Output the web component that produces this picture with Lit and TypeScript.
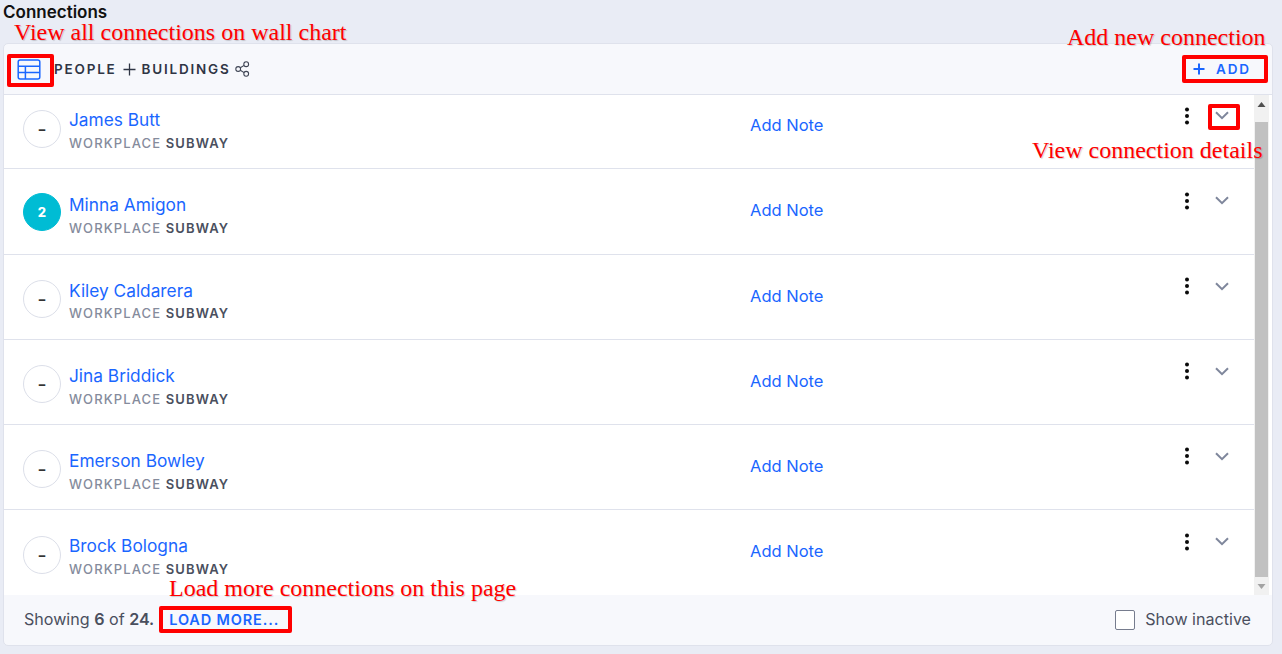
import { LitElement, html, css, svg } from "lit";
import { customElement } from "lit/decorators.js";

const people: [string, string][] = [
  ["James Butt", ""],
  ["Minna Amigon", "2"],
  ["Kiley Caldarera", ""],
  ["Jina Briddick", ""],
  ["Emerson Bowley", ""],
  ["Brock Bologna", ""],
];

const notes = [
  { t: "View all connections on wall chart", cls: "n1" },
  { t: "Add new connection", cls: "n2" },
  { t: "View connection details", cls: "n3" },
  { t: "Load more connections on this page", cls: "n4" },
];

@customElement("app-root")
export class AppRoot extends LitElement {
  static styles = css`
    :host {
      display: block;
      position: relative;
      width: 1282px;
      height: 654px;
      overflow: hidden;
      background: #e9ecf5;
      font-family: Inter, "Open Sans", sans-serif;
      color: #3f4555;
    }
    .title {
      height: 43px;
      box-sizing: border-box;
      padding: 3px 0 0 3px;
      font-size: 17px;
      line-height: 19px;
      font-weight: 600;
      color: #111;
    }
    .card {
      margin: 0 9px 0 3px;
      height: 603px;
      box-sizing: border-box;
      border: 1px solid #dfe2ec;
      border-radius: 5px;
      background: #f7f8fc;
      display: flex;
      flex-direction: column;
      overflow: hidden;
    }
    .head {
      height: 50px;
      flex: none;
      display: flex;
      align-items: center;
      padding: 0 21px 0 13px;
      border-bottom: 1px solid #dfe2ec;
    }
    .head-title {
      margin-left: 13px;
      font-size: 13.5px;
      font-weight: 600;
      letter-spacing: 1.8px;
      color: #2f3545;
      display: flex;
      align-items: center;
    }
    .plus-sm { margin: 0 6px 0 6px; display: block; }
    .share { margin-left: 4px; display: block; }
    .add {
      margin-left: auto;
      display: flex;
      align-items: center;
      gap: 11px;
      font-size: 13.5px;
      font-weight: 600;
      letter-spacing: 1.9px;
      color: #1a66ff;
    }
    .body { flex: 1; display: flex; min-height: 0; background: #fff; }
    .list { flex: 1; min-width: 0; overflow: hidden; }
    .row {
      height: 85.2px;
      box-sizing: border-box;
      border-bottom: 1px solid #dfe2ec;
      display: flex;
      align-items: flex-start;
      padding: 24px 0 0 19px;
    }
    .row:first-child { height: 74.4px; padding-top: 13px; }
    .row:last-child { border-bottom: 0; }
    .badge {
      width: 38px;
      height: 38px;
      box-sizing: border-box;
      flex: none;
      margin-top: 1.5px;
      border: 1px solid #dcdfe9;
      border-radius: 50%;
      display: flex;
      align-items: center;
      justify-content: center;
      font-size: 13px;
      font-weight: 800;
      color: #333;
    }
    .badge.on { background: #00bcd4; border-color: #00bcd4; color: #fff; margin-top: 0; }
    .who { margin-left: 8px; width: 681px; flex: none; padding-top: 1px; }
    .name { font-size: 17.3px; line-height: 22px; color: #1a66ff; }
    .sub {
      margin-top: 3.9px;
      font-size: 13px;
      line-height: 16px;
      letter-spacing: 1.12px;
      font-weight: 500;
      color: #858b9c;
    }
    .sub b { color: #4a4f5e; font-weight: 600; }
    .note { font-size: 16.5px; line-height: 22px; margin-top: 6px; color: #1a66ff; width: 434px; flex: none; }
    .dots { margin-top: -1.5px; display: block; flex: none; }
    .chev { margin: 3px 0 0 25px; display: block; flex: none; }
    .bar {
      width: 15px;
      margin-right: 3px;
      flex: none;
      background: #f1f1f1;
      display: flex;
      flex-direction: column;
      align-items: center;
    }
    .arrow { height: 17px; flex: none; display: block; }
    .thumb { flex: 1; width: 13px; background: #c1c1c1; margin: 10px 0 1px; }
    .foot {
      height: 50px;
      flex: none;
      display: flex;
      align-items: center;
      padding: 0 21px 0 20px;
      font-size: 16.1px;
      color: #4a4f5e;
    }
    .foot b { font-weight: 600; }
    .txt { padding-bottom: 2px; }
    .more {
      margin-left: 15px;
      font-size: 14.5px;
      font-weight: 600;
      letter-spacing: 0.85px;
      color: #1a66ff;
    }
    .inactive { margin-left: auto; display: flex; align-items: center; gap: 10px; }
    .box {
      width: 20px;
      height: 20px;
      box-sizing: border-box;
      border: 1px solid #767c8e;
      border-radius: 2px;
      background: #fff;
    }
    .mark { position: absolute; box-sizing: border-box; border: 4px solid #f00; border-radius: 2px; }
    .m1 { left: 7px; top: 54px; width: 47px; height: 33px; }
    .m2 { left: 1182px; top: 55px; width: 86px; height: 28px; }
    .m3 { left: 1208px; top: 104px; width: 32px; height: 26px; }
    .m4 { left: 159px; top: 606px; width: 133px; height: 27px; }
    .label {
      position: absolute;
      font-family: "Liberation Serif", serif;
      font-size: 24px;
      line-height: 20px;
      color: #f00;
      white-space: nowrap;
      text-shadow: 1px 1px 1px rgba(0, 0, 0, 0.18);
    }
    .n1 { left: 14px; top: 22px; }
    .n2 { left: 1067px; top: 27px; }
    .n3 { left: 1032px; top: 140px; }
    .n4 { left: 169px; top: 578px; }
  `;

  private tableIcon() {
    return svg`<svg width="24" height="21" viewBox="0 0 24 21" fill="none" stroke="#1a66ff" stroke-width="1.5" style="display:block">
      <rect x="1.2" y="1" width="21.6" height="19" rx="2"/>
      <path d="M1.2 7.2H22.8M1.2 13.6H22.8M8.4 7.2V20"/>
    </svg>`;
  }

  private shareIcon() {
    return svg`<svg class="share" width="15" height="16" viewBox="0 0 15 16" fill="none" stroke="#3f4555" stroke-width="1.1">
      <circle cx="3.2" cy="8" r="2.4"/><circle cx="11.2" cy="3.2" r="2.4"/><circle cx="11.2" cy="12.8" r="2.4"/>
      <path d="M5.3 6.8 9.1 4.4M5.3 9.2 9.1 11.6"/>
    </svg>`;
  }

  private plus(size: number, color: string, sw: number, cls: string) {
    const e = size - 0.5;
    return svg`<svg class=${cls} width=${size} height=${size} viewBox="0 0 ${size} ${size}" fill="none" stroke=${color} stroke-width=${sw}>
      <path d="M0.5 ${size / 2}H${e}M${size / 2} 0.5V${e}"/>
    </svg>`;
  }

  private dots() {
    return svg`<svg class="dots" width="6" height="18" viewBox="0 0 6 18" fill="#0a0a0a">
      <circle cx="3" cy="2.5" r="2"/><circle cx="3" cy="9" r="2"/><circle cx="3" cy="15.5" r="2"/>
    </svg>`;
  }

  private chev() {
    return svg`<svg class="chev" width="14" height="9" viewBox="0 0 14 9" fill="none" stroke="#7f879c" stroke-width="2">
      <path d="M1 1.2 7 7.2 13 1.2"/>
    </svg>`;
  }

  render() {
    return html`
      <div class="title">Connections</div>
      <div class="card">
        <div class="head">
          ${this.tableIcon()}
          <div class="head-title">
            PEOPLE${this.plus(13, "#2f3545", 1.3, "plus-sm")}BUILDINGS${this.shareIcon()}
          </div>
          <div class="add">${this.plus(12, "#1a66ff", 2, "")}ADD</div>
        </div>
        <div class="body">
          <div class="list">
            ${people.map(
              ([n, c]) => html`
                <div class="row">
                  <div class="badge ${c ? "on" : ""}">${c || "–"}</div>
                  <div class="who">
                    <div class="name">${n}</div>
                    <div class="sub">WORKPLACE <b>SUBWAY</b></div>
                  </div>
                  <div class="note">Add Note</div>
                  ${this.dots()} ${this.chev()}
                </div>
              `
            )}
          </div>
          <div class="bar">
            <svg class="arrow" width="9" height="17" viewBox="0 0 9 17" fill="#505050"><path d="M0.5 12 4.5 7 8.5 12Z"/></svg>
            <div class="thumb"></div>
            <svg class="arrow" width="9" height="17" viewBox="0 0 9 17" fill="#a3a3a3"><path d="M0.5 6 4.5 11 8.5 6Z"/></svg>
          </div>
        </div>
        <div class="foot">
          <span class="txt">Showing <b>6</b> of <b>24.</b></span>
          <span class="txt more">LOAD MORE...</span>
          <div class="inactive"><span class="box"></span><span class="txt">Show inactive</span></div>
        </div>
      </div>
      <div class="mark m1"></div>
      <div class="mark m2"></div>
      <div class="mark m3"></div>
      <div class="mark m4"></div>
      ${notes.map((n) => html`<div class="label ${n.cls}">${n.t}</div>`)}
    `;
  }
}
